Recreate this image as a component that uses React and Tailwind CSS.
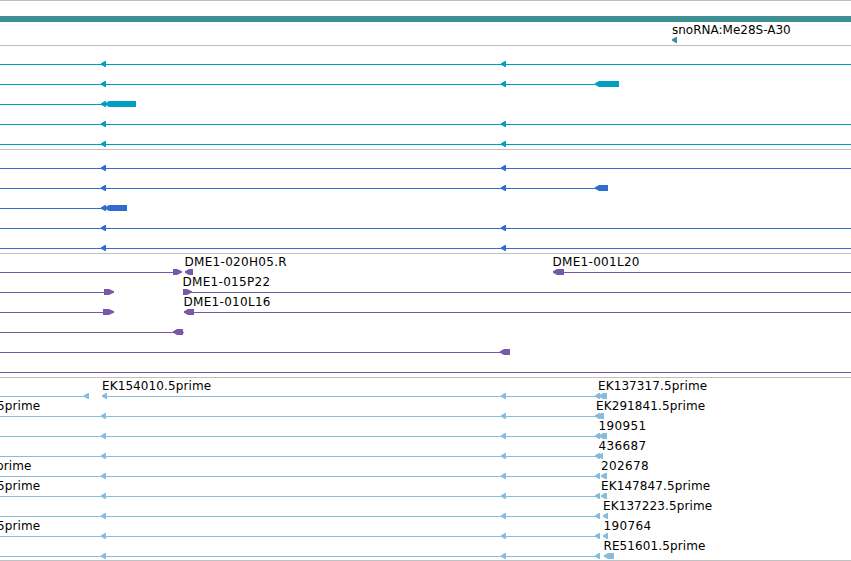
const TEAL = '#3f8f94'
const CYAN = '#009fc0'
const BLUE = '#316dce'
const PURPLE = '#7858a8'
const SKY = '#87bcde'

// lines: [start, end], left / right: exons pointing that way
const fullSpan = {
  lines: [[0, 851]],
  left: [[101, 106], [501, 506]]
}

const TRACKS = [
  {
    id: 'genes-a',
    color: CYAN,
    rows: [
      fullSpan,
      { lines: [[0, 619]], left: [[101, 106], [501, 506], [595, 619]] },
      { lines: [[0, 136]], left: [[101, 106], [105, 136]] },
      fullSpan,
      fullSpan
    ]
  },
  {
    id: 'genes-b',
    color: BLUE,
    rows: [
      fullSpan,
      { lines: [[0, 608]], left: [[101, 106], [501, 506], [595, 608]] },
      { lines: [[0, 127]], left: [[101, 106], [105, 127]] },
      fullSpan,
      fullSpan
    ]
  },
  {
    id: 'bac-ends',
    color: PURPLE,
    labelClass: 'tracking-[0.3px]',
    rows: [
      {
        lines: [[0, 181], [554, 851]],
        left: [[185, 193], [553, 564]],
        right: [[173, 182]],
        labels: [[184.5, 'DME1-020H05.R'], [552.5, 'DME1-001L20']]
      },
      {
        lines: [[0, 114], [183, 851]],
        right: [[104, 114], [183, 192]],
        labels: [[182.5, 'DME1-015P22']]
      },
      {
        lines: [[0, 114], [184, 851]],
        left: [[184, 194]],
        right: [[103, 114]],
        labels: [[183.5, 'DME1-010L16']]
      },
      { lines: [[0, 184]], left: [[173, 183]] },
      { lines: [[0, 510]], left: [[500, 510]] },
      { lines: [[0, 851]] }
    ]
  },
  {
    id: 'ests',
    color: SKY,
    labelClass: 'tracking-[0.1px]',
    rows: [
      {
        lines: [[0, 86], [103, 606]],
        left: [[84, 89], [102, 107], [501, 506], [595, 600], [599, 607]],
        labels: [[102, 'EK154010.5prime'], [598, 'EK137317.5prime']]
      },
      {
        lines: [[0, 604]],
        left: [[101, 106], [501, 506], [595, 600], [597, 604]],
        labels: [[-3, '5prime'], [596, 'EK291841.5prime']]
      },
      {
        lines: [[0, 606]],
        left: [[101, 106], [501, 506], [595, 600], [599, 607]],
        labels: [[598.5, '190951']]
      },
      {
        lines: [[0, 602]],
        left: [[101, 106], [501, 506], [595, 600], [598, 603]],
        labels: [[598.5, '436687']]
      },
      {
        lines: [[0, 599]],
        left: [[101, 106], [501, 506], [595, 600], [601, 607]],
        labels: [[-4, 'prime'], [601, '202678']]
      },
      {
        lines: [[0, 599]],
        left: [[101, 106], [501, 506], [595, 600], [601, 607]],
        labels: [[-3, '5prime'], [601, 'EK147847.5prime']]
      },
      {
        lines: [[0, 599]],
        left: [[101, 106], [501, 506], [595, 600], [603, 608]],
        labels: [[603, 'EK137223.5prime']]
      },
      {
        lines: [[0, 599]],
        left: [[101, 106], [501, 506], [595, 600], [603, 608]],
        labels: [[-3, '5prime'], [603.5, '190764']]
      },
      {
        lines: [[0, 599]],
        left: [[101, 106], [501, 506], [595, 600], [604, 614]],
        labels: [[603.5, 'RE51601.5prime']]
      }
    ]
  }
]

function leftPath([a, b]) {
  const head = Math.min(a + 4, b)
  return `M${a} 17.3 L${head} 15 H${b} V21 H${head} L${a} 18.8Z`
}

function rightPath([a, b]) {
  const head = Math.max(b - 5, a)
  return `M${b} 17.3 L${head} 15 H${a} V21 H${head} L${b} 18.6Z`
}

function Row({ color, lines = [], left = [], right = [], labels = [], labelClass = '' }) {
  return (
    <div className="relative h-5">
      <svg className="block h-5 w-[851px] overflow-visible" fill={color}>
        {lines.map(([a, b]) => (
          <rect key={a} x={a} y="18" width={b - a} height="1" shapeRendering="crispEdges" />
        ))}
        {left.map((f) => (
          <path key={f[0]} d={leftPath(f)} />
        ))}
        {right.map((f) => (
          <path key={f[0]} d={rightPath(f)} />
        ))}
      </svg>
      {labels.map(([x, text]) => (
        <span
          key={text + x}
          className={`absolute top-0.5 text-[12px] leading-3 whitespace-nowrap text-black ${
            /^\d{6}$/.test(text) ? 'tracking-[0.35px]' : labelClass
          }`}
          style={{ left: x }}
        >
          {text}
        </span>
      ))}
    </div>
  )
}

export default function App() {
  return (
    <div className="h-[561px] w-[851px] overflow-hidden border-b border-[#c0c0c0] bg-white font-['DejaVu_Sans',sans-serif]">
      <section className="h-[45px] border-t border-[#c0c0c0]">
        <div className="h-[21px] pt-[15px]">
          <div className="h-1.5 bg-[#3f8f94]" />
        </div>
        <Row color={TEAL} left={[[672, 677]]} labels={[[672, 'snoRNA:Me28S-A30']]} />
      </section>
      {TRACKS.map((track) => (
        <section key={track.id} className="border-t border-[#c0c0c0] pb-[3px]">
          {track.rows.map((row, i) => (
            <Row key={i} color={track.color} labelClass={track.labelClass} {...row} />
          ))}
        </section>
      ))}
    </div>
  )
}
